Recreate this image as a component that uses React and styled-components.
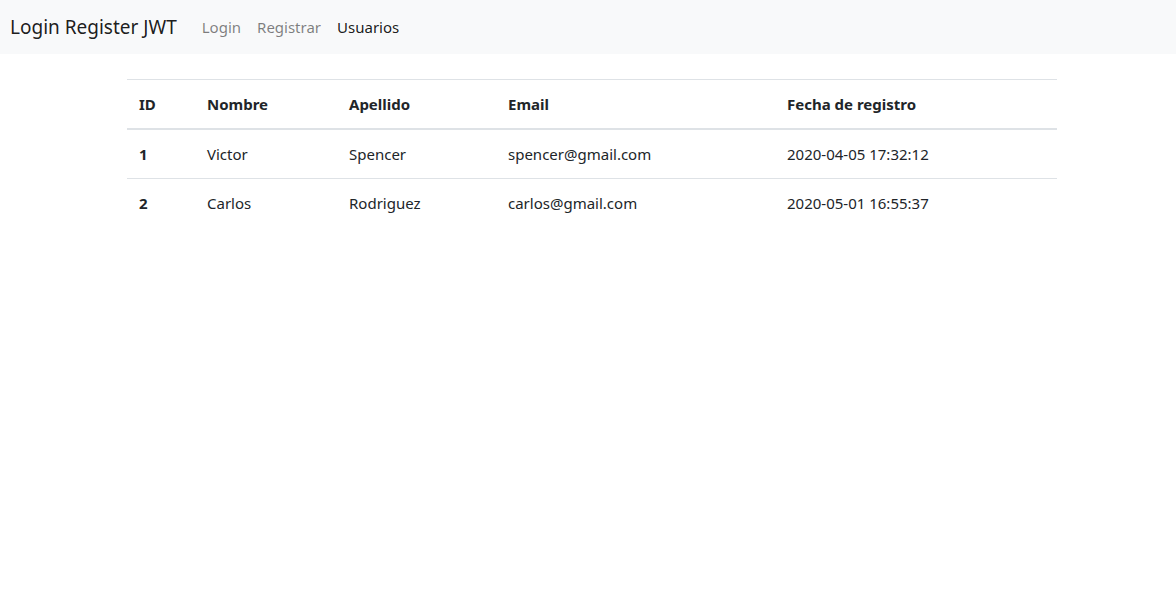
import React from "react";
import styled, { createGlobalStyle } from "styled-components";

const GlobalStyle = createGlobalStyle`
  html, body {
    margin: 0;
    padding: 0;
    background: #fff;
    font-family: "Noto Sans", "Open Sans", sans-serif;
    font-size: 15px;
    line-height: 24px;
    color: #212529;
  }
`;

const usuarios = [
  { id: 1, nombre: "Victor", apellido: "Spencer", email: "spencer@gmail.com", fecha: "2020-04-05 17:32:12" },
  { id: 2, nombre: "Carlos", apellido: "Rodriguez", email: "carlos@gmail.com", fecha: "2020-05-01 16:55:37" },
];

const columnas = [
  { titulo: "ID", ancho: 68 },
  { titulo: "Nombre", ancho: 142 },
  { titulo: "Apellido", ancho: 159 },
  { titulo: "Email", ancho: 279 },
  { titulo: "Fecha de registro", ancho: 282 },
];

export default function App() {
  return (
    <>
      <GlobalStyle />
      <Navbar>
        <Brand href="#">Login Register JWT</Brand>
        <NavList>
          <NavLink href="#">Login</NavLink>
          <NavLink href="#">Registrar</NavLink>
          <NavLink href="#" active>
            Usuarios
          </NavLink>
        </NavList>
      </Navbar>
      <Main>
        <Table>
          <thead>
            <tr>
              {columnas.map((c) => (
                <Th key={c.titulo} style={{ width: c.ancho }}>
                  {c.titulo}
                </Th>
              ))}
            </tr>
          </thead>
          <tbody>
            {usuarios.map((u) => (
              <tr key={u.id}>
                <Td bold>{u.id}</Td>
                <Td>{u.nombre}</Td>
                <Td>{u.apellido}</Td>
                <Td>{u.email}</Td>
                <Td>{u.fecha}</Td>
              </tr>
            ))}
          </tbody>
        </Table>
      </Main>
    </>
  );
}

const Navbar = styled.nav`
  display: flex;
  align-items: center;
  height: 54px;
  padding: 0 16px 0 10px;
  background-color: #f8f9fa;
  box-sizing: border-box;
`;

const Brand = styled.a`
  font-size: 19px;
  line-height: 30px;
  color: rgba(0, 0, 0, 0.9);
  text-decoration: none;
  margin-right: 17px;
`;

const NavList = styled.div`
  display: flex;
  align-items: center;
`;

const NavLink = styled.a`
  padding: 8px;
  font-size: 15px;
  color: ${(p) => (p.active ? "rgba(0, 0, 0, 0.9)" : "rgba(0, 0, 0, 0.5)")};
  text-decoration: none;
`;

const Main = styled.main`
  display: flex;
  justify-content: center;
  padding-left: 8px;
  margin-top: 25px;
`;

const Table = styled.table`
  width: 930px;
  table-layout: fixed;
  border-collapse: collapse;
  color: #212529;
`;

const Th = styled.th`
  box-sizing: border-box;
  text-align: left;
  font-weight: 700;
  padding: 12px;
  border-top: 1px solid #dee2e6;
  border-bottom: 2px solid #dee2e6;
  vertical-align: bottom;
`;

const Td = styled.td`
  padding: 12px;
  border-top: 1px solid #dee2e6;
  font-weight: ${(p) => (p.bold ? 700 : 400)};
`;
